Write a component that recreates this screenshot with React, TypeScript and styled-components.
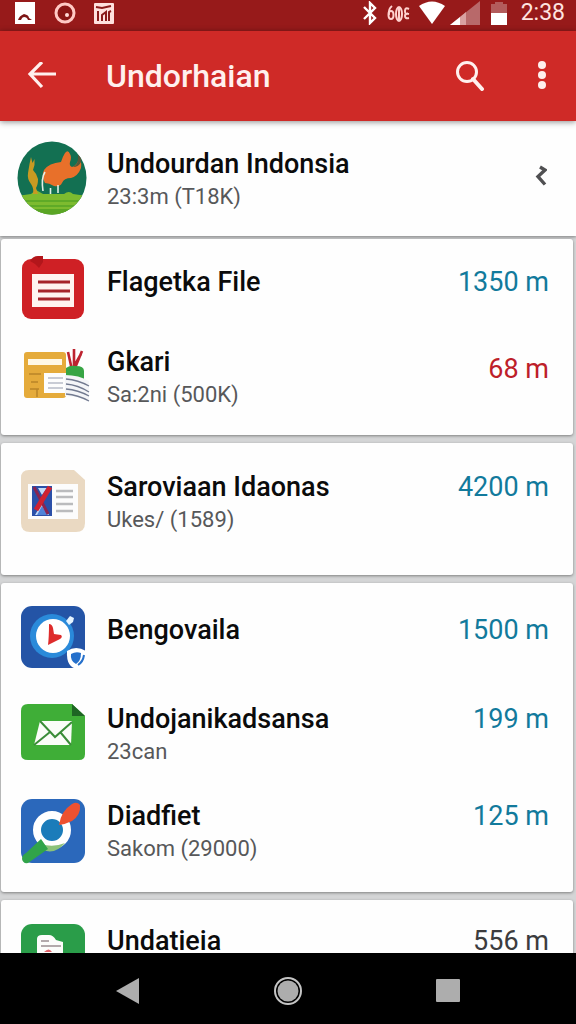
import React from "react";
import styled, { createGlobalStyle } from "styled-components";

const GlobalStyle = createGlobalStyle`
  *, *::before, *::after { box-sizing: border-box; }
  body { margin: 0; background: #d4d5d6; font-family: Roboto, "Liberation Sans", sans-serif; }
  h1, h2, p, ul { margin: 0; padding: 0; }
  button { border: 0; padding: 0; background: none; color: inherit; font: inherit; cursor: pointer; }
`;

const Screen = styled.div`
  display: flex;
  flex-direction: column;
  height: 100vh;
  overflow: hidden;
`;

const StatusBar = styled.div`
  flex: none;
  display: flex;
  justify-content: space-between;
  height: 31px;
  padding: 0 11px 0 14px;
  background: #971a1a;
  color: #fff;
`;

const StatusGroup = styled.div<{ $gap: number }>`
  display: flex;
  align-items: center;
  gap: ${(p) => p.$gap}px;
  height: 25px;
`;

const Clock = styled.time`
  margin-left: 3px;
  font-size: 23px;
  line-height: 27px;
  color: #ffe3e0;
`;

const AppBar = styled.header`
  flex: none;
  position: relative;
  display: flex;
  align-items: center;
  height: 90px;
  padding: 0 14px 0 22px;
  background: #cf2a27;
  color: #fff0ee;
  box-shadow: 0 1px 6px rgba(0, 0, 0, 0.45);
`;

const BarButton = styled.button`
  display: grid;
  place-items: center;
  width: 40px;
  height: 48px;
`;

const BarTitle = styled.h1`
  flex: 1;
  padding-left: 44px;
  font-size: 32px;
  font-weight: 500;
  line-height: 40px;
`;

const BarActions = styled.div`
  display: flex;
  gap: 32px;
`;

const List = styled.main`
  flex: 1;
  min-height: 0;
  overflow: hidden;
  background: #d4d5d6;
`;

const Section = styled.section<{ $top: number; $bottom: number; $gap?: number }>`
  display: flex;
  flex-direction: column;
  gap: ${(p) => p.$gap ?? 0}px;
  margin: 0 3px 8px 1px;
  padding: ${(p) => p.$top}px 24px ${(p) => p.$bottom}px 16px;
  background: #fefefe;
  border-radius: 3px;
  box-shadow: 0 1px 3px rgba(0, 0, 0, 0.4);
`;

const Account = styled(Section)`
  margin: 0 0 3px;
  padding-left: 17px;
  border-radius: 0;
`;

const Row = styled.div`
  display: flex;
  align-items: flex-start;
  min-height: 66px;
`;

const IconSlot = styled.div`
  flex: none;
  width: 90px;
  height: 64px;
  display: flex;
  align-items: center;

  svg { overflow: visible; }
`;

const Texts = styled.div<{ $single?: boolean }>`
  flex: 1;
  min-width: 0;
  padding-top: ${(p) => (p.$single ? 8 : 1)}px;
`;

const Title = styled.h2`
  font-size: 27px;
  font-weight: 500;
  line-height: 34px;
  color: #0b0b0b;
  white-space: nowrap;
`;

const Sub = styled.p`
  font-size: 22px;
  line-height: 32px;
  color: #57585a;
`;

const tones = { blue: "#127a9c", red: "#bd1f2a", dark: "#3c3c3e" };

const Value = styled.span<{ $tone: keyof typeof tones; $drop?: boolean }>`
  padding-top: ${(p) => (p.$drop ? 8 : 1)}px;
  font-size: 27px;
  line-height: 34px;
  color: ${(p) => tones[p.$tone]};
`;

const Chevron = styled.button`
  display: grid;
  place-items: center;
  width: 24px;
  height: 60px;
  margin-right: -1px;
`;

const NavBar = styled.nav`
  flex: none;
  display: flex;
  justify-content: center;
  align-items: center;
  gap: 112px;
  height: 71px;
  padding-top: 4px;
  background: #000;
`;

const NavButton = styled.button`
  display: grid;
  place-items: center;
  width: 48px;
  height: 48px;
`;

const EmblemIcon = () => (
  <svg width="70" height="74" viewBox="0 0 70 74" aria-hidden="true">
    <defs>
      <clipPath id="emblem"><ellipse cx="35" cy="37" rx="34.5" ry="36.5" /></clipPath>
    </defs>
    <g clipPath="url(#emblem)">
      <rect width="70" height="74" fill="#137052" />
      <path d="M0 55l14-2 5-4 7 4 21 0q5-4 9 0l14 2v19H0z" fill="#7dbb2f" />
      <path d="M0 60h70M0 65h70" stroke="#55a526" strokeWidth="1.6" />
      <path d="M0 68h70v6H0z" fill="#5aa524" />
      <path d="M12.500 23l1.500-7 1.500 6 2-4v6l-1.500 5q4 4 5 9 0 6-2 9l2 6h-5q1-6-2-10-4-5-3-11z" fill="#c99a22" />
      <path d="M28 42q-4-7-1-13 5-7 17-8 2-6 4-9 3-4 5 1 2 3 0 8-1 4 2 5 5-1 7-9 3 4 2 10-3 8-10 10-7 0-9 5-2 4-8 3-5-3-9-3z" fill="#e8702a" />
      <path d="M56 26q6-2 5-13 4 3 3 8-2 5-8 5z" fill="#57583a" />
      <path d="M28 31q-4 6-2 19M41 44v8M33.500 47v6" stroke="#e4efe6" strokeWidth="1.600" fill="none" />
    </g>
  </svg>
);

const FileIcon = () => (
  <svg width="68" height="64" viewBox="0 0 68 64" aria-hidden="true">
    <rect x="5" y="2" width="62" height="60" rx="9" fill="#cf2025" />
    <path d="M13 4q3-5 8-5h5v6l-4 6-4-4z" fill="#b3161b" />
    <rect x="15" y="17" width="42" height="33" fill="#fff3f0" />
    <path d="M21 25h32M21 34h32M21 42h32" stroke="#a6242a" strokeWidth="3" />
  </svg>
);

const BriefIcon = () => (
  <svg width="74" height="64" viewBox="0 0 74 64" aria-hidden="true">
    <path d="M51 8l4 18 9-16M57 5v19M65 7l-7 17" stroke="#bd2330" strokeWidth="2.600" fill="none" />
    <rect x="7" y="8" width="42" height="46" rx="3" fill="#e5ab3b" />
    <rect x="11" y="15" width="34" height="6" fill="#fff8e6" />
    <path d="M12 30h12M14 38h7M13 45h9M20 45v8" stroke="#b98528" strokeWidth="1.500" />
    <path d="M49 32v-8q4-3 10-2 8 0 8 5l0 9-18-3z" fill="#37a544" />
    <rect x="27" y="29" width="22" height="20" fill="#fdfdfd" />
    <path d="M31 34h15M31 39h15M31 44h15" stroke="#b8bcc8" strokeWidth="1.500" />
    <path d="M48 31q14 0 24 6v21q-10-6-24-6z" fill="#f4f5f8" />
    <path d="M49 35q12 1 23 7M49 40q12 1 23 8M49 45q12 1 23 7M49 50q12 1 23 7" stroke="#727a90" strokeWidth="1.300" fill="none" />
  </svg>
);

const CardIcon = () => (
  <svg width="68" height="64" viewBox="0 0 68 64" aria-hidden="true">
    <path d="M12 1h45l11 10v43q0 9-9 9H13q-9 0-9-9V9q0-8 8-8z" fill="#ead9c2" />
    <rect x="11" y="15" width="50" height="35" fill="#fcfcfc" />
    <rect x="15" y="17" width="20" height="30" fill="#2b50a8" />
    <path d="M21 19h9l-5 7zM18 46l7-12 7 12z" fill="#c3daf7" />
    <path d="M25 37l-5 9h11z" fill="#4f83d8" />
    <path d="M17 18l14 27" stroke="#8a2450" strokeWidth="3" />
    <path d="M33 18L19 41" stroke="#cf2231" strokeWidth="5" />
    <path d="M39 22h17M39 28h17M39 35h17M39 42h17" stroke="#babbbd" strokeWidth="2.400" />
  </svg>
);

const PlayIcon = () => (
  <svg width="68" height="64" viewBox="0 0 68 64" aria-hidden="true">
    <rect x="4" y="1" width="64" height="62" rx="11" fill="#2454a6" />
    <circle cx="35" cy="31" r="22" fill="#2a8ada" />
    <circle cx="36" cy="31" r="17" fill="#fff" />
    <path d="M32 19q3 0 4 4l1 6 7 1q2 2-1 4L31 40q1-8 1-21z" fill="#de2c2c" />
    <path d="M49 16l4-5 4 2-1 4-4 3z" fill="#e5f4ff" />
    <path d="M50 46q9-6 19 0 1 14-8 18-12-1-11-18z" fill="#fff" />
    <path d="M54 49q5-3 10-1 0 8-5 11-6-3-5-10z" fill="#2570cb" />
    <path d="M67 50q-1 7-6 10" stroke="#2570cb" strokeWidth="2" fill="none" />
  </svg>
);

const MailIcon = () => (
  <svg width="68" height="64" viewBox="0 0 68 64" aria-hidden="true">
    <path d="M11 3h44l13 12v38q0 6-6 6H11q-7 0-7-6V10q0-7 7-7z" fill="#3fae37" />
    <path d="M55 3l13 12H55z" fill="#1e6524" />
    <path d="M23 20h32l-1 24H17z" fill="#fafdf8" />
    <path d="M23 20l15 16 17-15M17 44l16-13M54 44L44 32" stroke="#3a8d38" strokeWidth="2" fill="none" />
  </svg>
);

const LensIcon = () => (
  <svg width="68" height="64" viewBox="0 0 68 64" aria-hidden="true">
    <rect x="4" y="1" width="64" height="64" rx="11" fill="#2b68bb" />
    <circle cx="35" cy="32" r="15" fill="#1b7cba" stroke="#fff" strokeWidth="8" />
    <path d="M24 46q12 4 24-1-10 12-22 7z" fill="#8bc27a" />
    <path d="M42 27q2-14 13-21 5-3 8 1 1 10-8 16-6 3-13 4z" fill="#ee5130" />
    <path d="M24 41l7 10-20 14q-5 1-6-4 0-4 4-6z" fill="#31a44a" />
  </svg>
);

const SheetIcon = () => (
  <svg width="68" height="64" viewBox="0 0 68 64" aria-hidden="true">
    <rect x="4" y="1" width="64" height="64" rx="11" fill="#2a9d49" />
    <path d="M20 16q0-4 5-4h7q4 0 7 5l7 2v34H20z" fill="#fbfdfb" />
    <path d="M24 18h8M24 23h20" stroke="#9b8f93" strokeWidth="1.500" />
    <path d="M27 29q5-5 8 0z" fill="#e0626a" />
  </svg>
);

type Item = {
  icon: React.ReactNode;
  title: string;
  sub?: string;
  value: string;
  tone?: keyof typeof tones;
  drop?: boolean;
  single?: boolean;
};

const groups: { top: number; bottom: number; gap?: number; items: Item[] }[] = [
  {
    top: 18, bottom: 24, gap: 21,
    items: [
      { icon: <FileIcon />, title: "Flagetka File", value: "1350 m", single: true },
      { icon: <BriefIcon />, title: "Gkari", sub: "Sa:2ni (500K)", value: "68 m", tone: "red", drop: true },
    ],
  },
  {
    top: 26, bottom: 39,
    items: [{ icon: <CardIcon />, title: "Saroviaan Idaonas", sub: "Ukes/ (1589)", value: "4200 m" }],
  },
  {
    top: 22, bottom: 27, gap: 30,
    items: [
      { icon: <PlayIcon />, title: "Bengovaila", value: "1500 m", single: true },
      { icon: <MailIcon />, title: "Undojanikadsansa", sub: "23can", value: "199 m" },
      { icon: <LensIcon />, title: "Diadfiet", sub: "Sakom (29000)", value: "125 m" },
    ],
  },
  {
    top: 23, bottom: 24,
    items: [{ icon: <SheetIcon />, title: "Undatieia", value: "556 m", tone: "dark" }],
  },
];

const ItemRow = ({ item }: { item: Item }) => (
  <Row>
    <IconSlot>{item.icon}</IconSlot>
    <Texts $single={item.single}>
      <Title>{item.title}</Title>
      {item.sub && <Sub>{item.sub}</Sub>}
    </Texts>
    <Value $tone={item.tone ?? "blue"} $drop={item.drop || item.single}>{item.value}</Value>
  </Row>
);

export default function App() {
  return (
    <Screen>
      <GlobalStyle />
      <StatusBar>
        <StatusGroup $gap={18}>
          <svg width="22" height="22" viewBox="0 0 22 22" aria-hidden="true">
            <rect x="1" y="0" width="20" height="22" fill="#fff" />
            <path d="M4 18q1-4 6-6 5 1 5 4l3 2h-4q-1-3-4-3-2 0-3 3z" fill="#7d1515" />
          </svg>
          <svg width="22" height="22" viewBox="0 0 22 22" aria-hidden="true">
            <circle cx="11" cy="11" r="9" fill="#8a1515" stroke="#ffc9c5" strokeWidth="3" />
            <circle cx="13" cy="13" r="2" fill="#ffd9d6" />
          </svg>
          <svg width="20" height="22" viewBox="0 0 20 22" aria-hidden="true">
            <rect x="0" y="1" width="20" height="21" rx="1" fill="#ffe1de" />
            <path d="M2 5l6 1 9-2M4 19V9M8 19v-6l4-3v9M15 19v-9l2-1" stroke="#8a1a1a" strokeWidth="2" fill="none" />
          </svg>
        </StatusGroup>
        <StatusGroup $gap={4}>
          <svg width="16" height="24" viewBox="0 0 16 24" aria-hidden="true">
            <path d="M2 6l11 11-5 5V2l5 5L2 18" stroke="#fff" strokeWidth="2.400" fill="none" />
          </svg>
          <svg width="32" height="24" viewBox="0 0 32 24" aria-hidden="true">
            <g stroke="#ffd2cf" strokeWidth="2" fill="none">
              <path d="M10 5q-4 3-3 9" />
              <ellipse cx="9" cy="14" rx="2.500" ry="4" />
              <ellipse cx="17" cy="13" rx="3" ry="7" />
              <path d="M17 6v14M27 8q-4-2-4 2t3 2M27 13q-4-1-4 2t4 2" />
            </g>
          </svg>
          <svg width="28" height="24" viewBox="0 0 28 24" aria-hidden="true">
            <path d="M1 5q13-9 26 0L14 23z" fill="#fff" />
          </svg>
          <svg width="30" height="24" viewBox="0 0 30 24" aria-hidden="true">
            <path d="M0 24L30 0v24z" fill="#b8696a" />
            <path d="M0 24l10-8v8z" fill="#fff" />
            <path d="M10 16l6-5v13h-6z" fill="#d9a1a1" />
          </svg>
          <svg width="30" height="24" viewBox="0 0 30 24" aria-hidden="true">
            <path d="M11 1h8v2h4v9H7V3h4z" fill="#b35b5b" />
            <path d="M7 12h16v12H7z" fill="#fff" />
          </svg>
          <Clock>2:38</Clock>
        </StatusGroup>
      </StatusBar>
      <AppBar>
        <BarButton aria-label="Back">
          <svg width="30" height="28" viewBox="0 0 30 28" aria-hidden="true">
            <path d="M29 12H3M15 0L3 12l12 13" stroke="currentColor" strokeWidth="3.200" fill="none" />
          </svg>
        </BarButton>
        <BarTitle>Undorhaian</BarTitle>
        <BarActions>
          <BarButton aria-label="Search">
            <svg width="30" height="30" viewBox="0 0 30 30" aria-hidden="true">
              <circle cx="12" cy="11" r="9.500" stroke="currentColor" strokeWidth="3" fill="none" />
              <path d="M18 18l9 10" stroke="currentColor" strokeWidth="4" strokeLinecap="round" />
            </svg>
          </BarButton>
          <BarButton aria-label="More options">
            <svg width="8" height="30" viewBox="0 0 8 30" aria-hidden="true">
              <g fill="currentColor">
                <circle cx="4" cy="4" r="4" />
                <circle cx="4" cy="14" r="4" />
                <circle cx="4" cy="24" r="4" />
              </g>
            </svg>
          </BarButton>
        </BarActions>
      </AppBar>
      <List>
        <Account $top={25} $bottom={23}>
          <Row>
            <IconSlot><EmblemIcon /></IconSlot>
            <Texts>
              <Title>Undourdan Indonsia</Title>
              <Sub>23:3m (T18K)</Sub>
            </Texts>
            <Chevron aria-label="Open account">
              <svg width="12" height="22" viewBox="0 0 12 22" aria-hidden="true">
                <path d="M5 2l5 3-7 6.500 7 8" stroke="#505052" strokeWidth="3.400" fill="none" />
              </svg>
            </Chevron>
          </Row>
        </Account>
        {groups.map((g, i) => (
          <Section key={i} $top={g.top} $bottom={g.bottom} $gap={g.gap}>
            {g.items.map((item) => <ItemRow key={item.title} item={item} />)}
          </Section>
        ))}
      </List>
      <NavBar>
        <NavButton aria-label="Back">
          <svg width="24" height="28" viewBox="0 0 24 28" aria-hidden="true">
            <path d="M0 14L23 1v26z" fill="#adadad" />
          </svg>
        </NavButton>
        <NavButton aria-label="Home">
          <svg width="28" height="28" viewBox="0 0 28 28" aria-hidden="true">
            <circle cx="14" cy="14" r="13" fill="none" stroke="#c4c4c4" strokeWidth="2" />
            <circle cx="14" cy="14" r="10.500" fill="#adadad" />
          </svg>
        </NavButton>
        <NavButton aria-label="Recent apps">
          <svg width="24" height="24" viewBox="0 0 24 24" aria-hidden="true">
            <rect width="24" height="23" rx="1" fill="#adadad" />
          </svg>
        </NavButton>
      </NavBar>
    </Screen>
  );
}
